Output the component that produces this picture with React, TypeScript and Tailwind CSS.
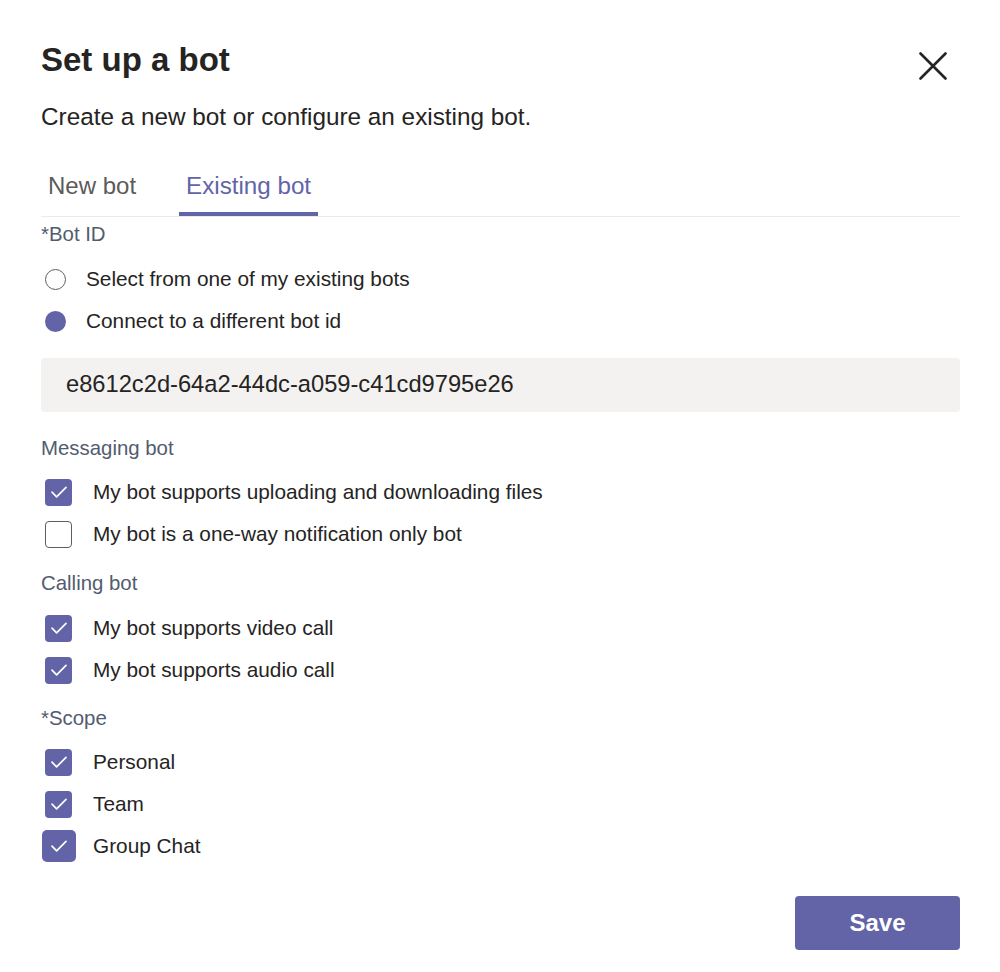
import React from "react";

const Check = () => (
  <svg width="18" height="14" viewBox="0 0 18 14" fill="none">
    <path d="M2 7.2 L6.6 11.8 L16 2.4" stroke="white" strokeWidth="1.7" strokeLinecap="round" strokeLinejoin="round" />
  </svg>
);

function CheckRow({ label, checked, big }: { label: string; checked: boolean; big?: boolean }) {
  return (
    <div className="flex h-[42px] items-center">
      <div className="ml-[4px] flex w-[27px] justify-center">
        {checked ? (
          <div
            className={
              big
                ? "flex h-[32px] w-[34px] shrink-0 items-center justify-center rounded-[5px] bg-[#6264a7]"
                : "flex h-[27px] w-[27px] shrink-0 items-center justify-center rounded-[4px] bg-[#6264a7]"
            }
          >
            <Check />
          </div>
        ) : (
          <div className="h-[27px] w-[27px] shrink-0 rounded-[4px] border-[1.5px] border-[#605e5c] bg-white" />
        )}
      </div>
      <span className="ml-[21px] text-[20.8px] leading-[28px] text-[#252423]">{label}</span>
    </div>
  );
}

function RadioRow({ label, checked }: { label: string; checked: boolean }) {
  return (
    <div className="flex h-[42px] items-center">
      {checked ? (
        <div className="ml-[4px] h-[21px] w-[21px] rounded-full bg-[#6264a7]" />
      ) : (
        <div className="ml-[4px] h-[21px] w-[21px] rounded-full border-[1.5px] border-[#605e5c] bg-white" />
      )}
      <span className="ml-[20px] text-[20.8px] leading-[28px] text-[#252423]">{label}</span>
    </div>
  );
}

const SectionLabel = ({ children, className }: { children: React.ReactNode; className: string }) => (
  <div className={"h-[28px] text-[20.4px] leading-[28px] text-[#525c6e] " + className}>{children}</div>
);

export default function App() {
  return (
    <div
      className="h-[972px] w-[1000px] bg-white"
      style={{ fontFamily: '"Liberation Sans", Arial, sans-serif' }}
    >
      <div className="ml-[41px] w-[919px] pt-[40px]">
        <div className="flex items-start justify-between">
          <h1 className="h-[40px] text-[33px] font-bold leading-[40px] text-[#252423]">Set up a bot</h1>
          <svg className="mr-[13px] mt-[12px]" width="28" height="28" viewBox="0 0 28 28" fill="none">
            <path d="M1.5 1.5 L26.5 26.5 M26.5 1.5 L1.5 26.5" stroke="#252423" strokeWidth="2.6" strokeLinecap="round" />
          </svg>
        </div>
        <p className="mt-[21px] h-[32px] text-[24.3px] leading-[32px] text-[#252423]">
          Create a new bot or configure an existing bot.
        </p>

        <div className="mt-[37px] flex gap-[37px] border-b border-[#edebe9]">
          <div className="ml-[1px] h-[46px] border-b-[4px] border-transparent px-[6px] text-[24px] leading-[32px] text-[#5c5b5a]">
            New bot
          </div>
          <div className="h-[46px] border-b-[4px] border-[#6264a7] px-[7px] text-[24.2px] leading-[32px] text-[#6264a7]">
            Existing bot
          </div>
        </div>

        <SectionLabel className="mt-[3px]">*Bot ID</SectionLabel>
        <div className="mt-[10px]">
          <RadioRow label="Select from one of my existing bots" checked={false} />
          <RadioRow label="Connect to a different bot id" checked={true} />
        </div>

        <div className="mt-[16px] flex h-[54px] items-center rounded-[4px] bg-[#f3f2f1] px-[25px] text-[23.7px] text-[#252423]">
          e8612c2d-64a2-44dc-a059-c41cd9795e26
        </div>

        <SectionLabel className="mt-[22px]">Messaging bot</SectionLabel>
        <div className="mt-[9px]">
          <CheckRow label="My bot supports uploading and downloading files" checked={true} />
          <CheckRow label="My bot is a one-way notification only bot" checked={false} />
        </div>

        <SectionLabel className="mt-[14px]">Calling bot</SectionLabel>
        <div className="mt-[10px]">
          <CheckRow label="My bot supports video call" checked={true} />
          <CheckRow label="My bot supports audio call" checked={true} />
        </div>

        <SectionLabel className="mt-[13px]">*Scope</SectionLabel>
        <div className="mt-[9px]">
          <CheckRow label="Personal" checked={true} />
          <CheckRow label="Team" checked={true} />
          <CheckRow label="Group Chat" checked={true} big />
        </div>

        <div className="mt-[29px] flex justify-end">
          <button className="h-[54px] w-[165px] rounded-[4px] bg-[#6264a7] text-[24px] font-bold text-white">
            Save
          </button>
        </div>
      </div>
    </div>
  );
}
